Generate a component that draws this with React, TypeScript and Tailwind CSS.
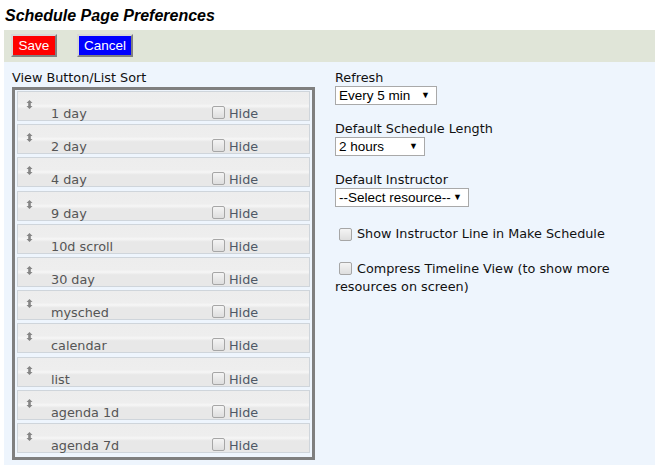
import React from 'react';

const views = [
  '1 day',
  '2 day',
  '4 day',
  '9 day',
  '10d scroll',
  '30 day',
  'mysched',
  'calendar',
  'list',
  'agenda 1d',
  'agenda 7d',
];

function Check() {
  return (
    <span className="inline-block w-[13px] h-[13px] rounded-[2px] border border-[#a6a6a6] bg-[linear-gradient(to_bottom,#f4f4f4,#dedede)] shrink-0" />
  );
}

function SortIcon() {
  return (
    <svg width="7" height="9" viewBox="0 0 7 9" className="shrink-0">
      <path d="M3.5 0 L6.5 3 L4.8 3 L4.8 6 L6.5 6 L3.5 9 L0.5 6 L2.2 6 L2.2 3 L0.5 3 Z" fill="#858585" />
    </svg>
  );
}

function FakeSelect({ value, width }: { value: string; width: string }) {
  return (
    <div
      className={`${width} h-[19px] bg-white border border-[#a9a9a9] flex items-center justify-between pl-[3px] pr-[6px] font-['Liberation_Sans',Arial,sans-serif] text-[13.5px] text-black leading-none`}
    >
      <span>{value}</span>
      <span className="text-[9px]">▼</span>
    </div>
  );
}

export default function App() {
  return (
    <div className="w-[659px] h-[470px] bg-white font-['DejaVu_Sans',Verdana,sans-serif] text-[12.8px]">
      <h1 className="h-[30px] pl-[5px] pt-[6px] font-['Liberation_Sans',Arial,sans-serif] text-[16px] font-bold italic leading-[20px] text-black">
        Schedule Page Preferences
      </h1>

      <div className="mx-[4px] h-[32px] bg-[#e0e5d8] flex items-start gap-[20px] pl-[7px] pt-[4px]">
        <button className="w-[46px] h-[23px] bg-[#ff0000] text-white text-[13.5px] font-['Liberation_Sans',Arial,sans-serif] border-2 border-t-[#d8d8d8] border-l-[#d8d8d8] border-r-[#808080] border-b-[#808080] leading-none">
          Save
        </button>
        <button className="w-[56px] h-[23px] bg-[#0000ff] text-white text-[13.5px] font-['Liberation_Sans',Arial,sans-serif] border-2 border-t-[#d8d8d8] border-l-[#d8d8d8] border-r-[#808080] border-b-[#808080] leading-none">
          Cancel
        </button>
      </div>

      <div className="mx-[4px] h-[403px] bg-[#eef5fd] flex pt-[8px] pl-[8px] gap-[20px] text-[#111]">
        <div className="w-[303px]">
          <div className="leading-[16px]">View Button/List Sort</div>
          <div className="mt-[1px] border-[3px] border-[#7f7f7f] pt-[1px] px-[2px] pb-[4px] flex flex-col gap-[3.2px]">
            {views.map((v) => (
              <div
                key={v}
                className="h-[30px] border border-[#cfd5db] bg-[linear-gradient(to_bottom,#ededed_0%,#eeeeee_42%,#f6f6f6_50%,#e8e8e8_60%,#e8e8e8_100%)] flex text-[#555]"
              >
                <div className="w-[33px] pl-[8px] pt-[8px]">
                  <SortIcon />
                </div>
                <div className="w-[161px] pt-[14px] leading-[16px]">{v}</div>
                <div className="flex items-start gap-[4px] pt-[14px]">
                  <Check />
                  <span className="leading-[16px] text-[#4f5866]">Hide</span>
                </div>
              </div>
            ))}
          </div>
        </div>

        <div className="flex flex-col">
          <div className="leading-[16px]">Refresh</div>
          <FakeSelect value="Every 5 min" width="w-[102px]" />
          <div className="leading-[16px] mt-[16px]">Default Schedule Length</div>
          <FakeSelect value="2 hours" width="w-[90px]" />
          <div className="leading-[16px] mt-[16px]">Default Instructor</div>
          <FakeSelect value="--Select resource--" width="w-[134px]" />
          <div className="mt-[19px] flex items-center gap-[5px] pl-[4px] leading-[16px]">
            <Check />
            <span>Show Instructor Line in Make Schedule</span>
          </div>
          <div className="mt-[19px] leading-[16px] w-[300px]">
            <span className="inline-block align-[-2px] ml-[4px] mr-[5px]">
              <Check />
            </span>
            Compress Timeline View (to show more resources on screen)
          </div>
        </div>
      </div>
    </div>
  );
}
